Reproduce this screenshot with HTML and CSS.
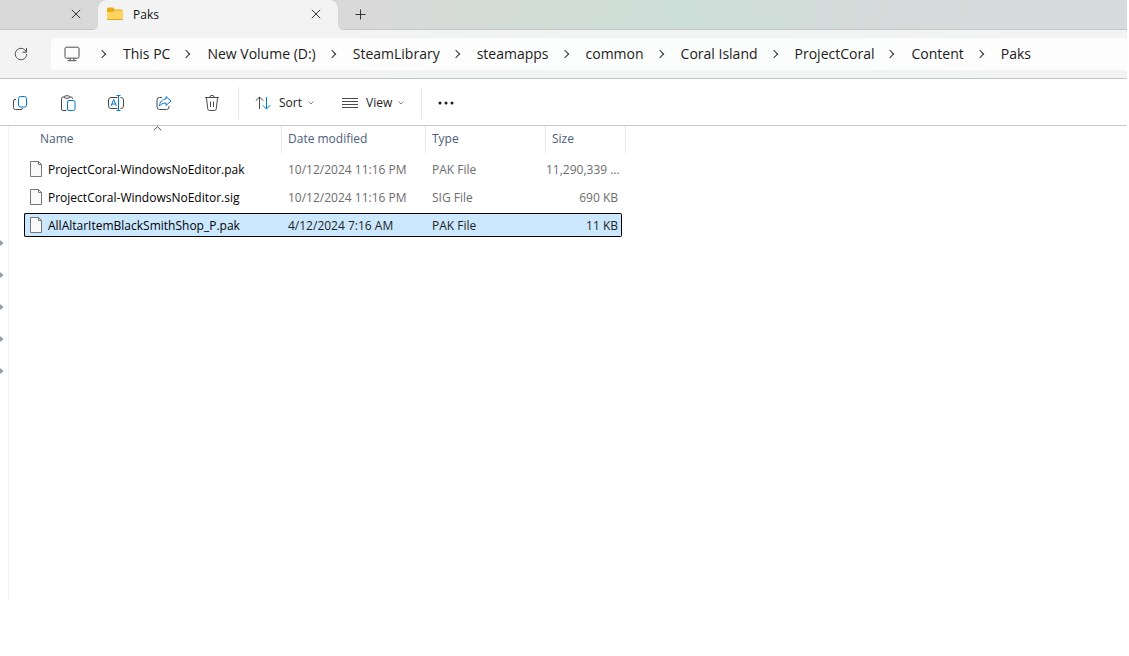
FILE: index.html
```html
<!DOCTYPE html>
<html lang="en">
<head>
<meta charset="utf-8">
<title>Paks</title>
<link rel="stylesheet" href="styles.css">
</head>
<body>
<div class="window">
  <header class="tabs">
    <div class="tab tab-inactive">
      <button class="tab-close" aria-label="Close tab"><svg width="10" height="10" viewBox="0 0 10 10"><path d="M.8.8l8.4 8.4M9.2.8L.8 9.2"/></svg></button>
    </div>
    <div class="tab tab-active">
      <svg class="folder" width="16" height="14" viewBox="0 0 16 14">
        <path d="M0 2a1.500 1.500 0 0 1 1.500-1.500H6L8 2.500h6.500A1.500 1.500 0 0 1 16 4v8H0z" fill="#eeab13"/>
        <path d="M0 5h6l2-1.500h8V12a1 1 0 0 1-1 1H1a1 1 0 0 1-1-1z" fill="#ffd562"/>
        <path d="M.3 12.500h15.400" stroke="#e6a51d" fill="none"/>
      </svg>
      <span class="tab-title">Paks</span>
      <button class="tab-close" aria-label="Close tab Paks"><svg width="10" height="10" viewBox="0 0 10 10"><path d="M.8.8l8.4 8.4M9.2.8L.8 9.2"/></svg></button>
    </div>
    <button class="tab-new" aria-label="New tab"><svg width="11" height="11" viewBox="0 0 11 11"><path d="M5.500.5v10M.5 5.500h10"/></svg></button>
  </header>

  <nav class="address" aria-label="Address">
    <button class="refresh" aria-label="Refresh"><svg width="14" height="14" viewBox="0 0 14 14"><path d="M12.400 5.200A5.700 5.700 0 1 0 12.700 7M12.500 1v4.200H8.500"/></svg></button>
    <ol class="crumbs">
      <li class="device"><svg width="16" height="16" viewBox="0 0 16 16"><rect x="1" y="1.200" width="14" height="11" rx="1.500"/><path d="M6 12.500v2M10 12.500v2M3.500 14.700h9"/></svg></li>
      <li><a href="#">This PC</a></li>
      <li><a href="#">New Volume (D:)</a></li>
      <li><a href="#">SteamLibrary</a></li>
      <li><a href="#">steamapps</a></li>
      <li><a href="#">common</a></li>
      <li><a href="#">Coral Island</a></li>
      <li><a href="#">ProjectCoral</a></li>
      <li><a href="#">Content</a></li>
      <li><a href="#">Paks</a></li>
    </ol>
  </nav>

  <div class="toolbar" role="toolbar" aria-label="Commands">
    <div class="tool-group">
      <button class="tool" aria-label="Copy"><svg width="16" height="16" viewBox="0 0 16 16"><path d="M4 4.500H3A1.500 1.500 0 0 0 1.500 6v6.500A2 2 0 0 0 3.500 14.500H9A1.500 1.500 0 0 0 10.500 13"/><rect class="blue" x="6.500" y="1.500" width="8" height="10.500" rx="2"/></svg></button>
      <button class="tool" aria-label="Paste"><svg width="16" height="16" viewBox="0 0 16 16"><path d="M6.500 15.500H3A1.500 1.500 0 0 1 1.500 14V3.500A1.500 1.500 0 0 1 3 2h1.500M9.500 2H11a1.500 1.500 0 0 1 1.500 1.500V4M5.500.8h3a1 1 0 0 1 1 1v.4a1 1 0 0 1-1 1h-3a1 1 0 0 1-1-1v-.4a1 1 0 0 1 1-1z"/><rect class="blue" x="7.500" y="5.500" width="7.500" height="10" rx="1.500"/></svg></button>
      <button class="tool" aria-label="Rename"><svg width="16" height="16" viewBox="0 0 16 16"><path d="M9.500 2.500H3A2.500 2.500 0 0 0 .5 5v6A2.500 2.500 0 0 0 3 13.500h6.500M12.500 2.500h.5A2.500 2.500 0 0 1 15.500 5v6a2.500 2.500 0 0 1-2.500 2.500h-.5"/><path class="blue" d="M10.500 .5v15M8.500 .5h4M8.500 15.500h4M3 11l2.700-6.500L8.400 11M4 9h3.500"/></svg></button>
      <button class="tool" aria-label="Share"><svg width="16" height="16" viewBox="0 0 16 16"><path d="M6 2.500H3.500A2.500 2.500 0 0 0 1 5v7a2.500 2.500 0 0 0 2.500 2.500h7A2.500 2.500 0 0 0 13 12v-1"/><path class="blue" d="M10 1.500l5 4.500-5 4.500V8C7 8 5 9 3.500 11 3.800 7 6 4.300 10 4z"/></svg></button>
      <button class="tool" aria-label="Delete"><svg width="16" height="16" viewBox="0 0 16 16"><path d="M1 2.500h14M5.800 2.500a2.200 2.200 0 0 1 4.400 0M2.500 3l1.200 10.500A2 2 0 0 0 5.700 15.500h4.600a2 2 0 0 0 2-2L13.500 3M6.500 6.500v5.500M9.500 6.500v5.500"/></svg></button>
    </div>
    <div class="menu-group">
      <button class="menu"><svg width="16" height="14" viewBox="0 0 16 14"><path d="M4.500 13V1M.8 4.700L4.500 1l3.700 3.700"/><path class="blue" d="M11.500 1v12M7.800 9.300l3.700 3.700 3.700-3.700"/></svg><span>Sort</span><svg class="caret" width="6" height="4" viewBox="0 0 6 4"><path d="M.5.5L3 3 5.500.5"/></svg></button>
      <button class="menu"><svg width="16" height="14" viewBox="0 0 16 14"><path d="M0 2.500h16M0 5.500h16M0 8.500h16M0 11.500h16"/></svg><span>View</span><svg class="caret" width="6" height="4" viewBox="0 0 6 4"><path d="M.5.5L3 3 5.500.5"/></svg></button>
    </div>
    <button class="more" aria-label="See more"><svg width="16" height="4" viewBox="0 0 16 4"><circle cx="2" cy="2" r="1.500"/><circle cx="8" cy="2" r="1.500"/><circle cx="14" cy="2" r="1.500"/></svg></button>
  </div>

  <main class="content">
    <aside class="sidebar" aria-label="Pinned folders">
      <svg width="4" height="6" viewBox="0 0 4 6"><path d="M0 .5h1L3.500 3 1 5.500H0z"/></svg>
      <svg width="4" height="6" viewBox="0 0 4 6"><path d="M0 .5h1L3.500 3 1 5.500H0z"/></svg>
      <svg width="4" height="6" viewBox="0 0 4 6"><path d="M0 .5h1L3.500 3 1 5.500H0z"/></svg>
      <svg width="4" height="6" viewBox="0 0 4 6"><path d="M0 .5h1L3.500 3 1 5.500H0z"/></svg>
      <svg width="4" height="6" viewBox="0 0 4 6"><path d="M0 .5h1L3.500 3 1 5.500H0z"/></svg>
    </aside>
    <table class="files">
      <colgroup><col class="col-name"><col class="col-date"><col class="col-type"><col class="col-size"><col class="col-end"></colgroup>
      <thead>
        <tr>
          <th scope="col" aria-sort="ascending">Name<svg class="sorted" width="9" height="5" viewBox="0 0 9 5"><path d="M.8 4.300L4.500.8l3.700 3.500"/></svg></th>
          <th scope="col">Date modified</th>
          <th scope="col">Type</th>
          <th scope="col" colspan="2">Size</th>
        </tr>
      </thead>
      <tbody>
        <tr>
          <td class="name"><div class="file"><svg width="12" height="16" viewBox="0 0 12 16"><path d="M.5.5h8l3 3v12H.5zM8.500.5v3h3"/></svg>ProjectCoral-WindowsNoEditor.pak</div></td>
          <td>10/12/2024 11:16 PM</td><td>PAK File</td><td class="size">11,290,339 ...</td>
        </tr>
        <tr>
          <td class="name"><div class="file"><svg width="12" height="16" viewBox="0 0 12 16"><path d="M.5.5h8l3 3v12H.5zM8.500.5v3h3"/></svg>ProjectCoral-WindowsNoEditor.sig</div></td>
          <td>10/12/2024 11:16 PM</td><td>SIG File</td><td class="size">690 KB</td>
        </tr>
        <tr class="selected">
          <td class="name"><div class="file"><svg width="12" height="16" viewBox="0 0 12 16"><path d="M.5.5h8l3 3v12H.5zM8.500.5v3h3"/></svg>AllAltarItemBlackSmithShop_P.pak</div></td>
          <td>4/12/2024 7:16 AM</td><td>PAK File</td><td class="size">11 KB</td>
        </tr>
      </tbody>
    </table>
  </main>
</div>
</body>
</html>
```
FILE: styles.css
```css
* { box-sizing: border-box; }

body {
  margin: 0;
  background: #fff;
  color: #1b1b1b;
  font: 12px/16px "Open Sans", "Noto Sans", sans-serif;
}

button {
  display: flex;
  align-items: center;
  padding: 0;
  border: 0;
  background: none;
  color: inherit;
  font: inherit;
}

svg {
  display: block;
  flex: none;
  fill: none;
  stroke: #4a4a4a;
}

.blue { stroke: #0078d4; }

.window {
  display: flex;
  flex-direction: column;
  min-height: 100vh;
  margin-right: 2px;
  padding-bottom: 56px;
}

/* Tabs */
.tabs {
  display: flex;
  height: 30px;
  border-bottom: 1px solid #c3c8c7;
  background: linear-gradient(90deg, #d9d9d9 33%, #d2ddd6 48%, #ceded9 60%, #d0ddd9 68%, #d7dada 80%, #d9dade 90%);
}

.tab {
  display: flex;
  align-items: center;
  padding: 0 17px 2px 0;
}

.tab-inactive {
  width: 98px;
  justify-content: flex-end;
}

.tab-active {
  position: relative;
  width: 240px;
  height: 30px;
  padding-left: 9px;
  border-radius: 8px 8px 0 0;
  background: #f3f3f3;
  box-shadow: 0 0 1px #aaa;
  clip-path: inset(0 -4px 0 -4px);
}

/* Curved feet where the tab meets the address bar */
.tab-active::before,
.tab-active::after {
  position: absolute;
  bottom: 0;
  width: 4px;
  height: 4px;
  content: "";
}

.tab-active::before {
  left: -4px;
  background: radial-gradient(circle at 0 0, transparent 3px, #f3f3f3 4px);
}

.tab-active::after {
  right: -4px;
  background: radial-gradient(circle at 100% 0, transparent 3px, #f3f3f3 4px);
}

.folder { stroke: none; }

.tab-title {
  flex: 1;
  margin-left: 10px;
  padding-top: 2px;
  color: #111;
}

.tab-close svg, .tab-new svg { stroke: #333; }
.tab-new { margin-left: 17px; }

/* Address bar */
.address {
  display: flex;
  align-items: center;
  height: 49px;
  padding: 8px 0;
  border-bottom: 1px solid #c3c8c7;
  background: linear-gradient(90deg, #f3f3f3 30%, #f0f4f2 55%, #f0f4f2 70%, #f3f3f4 90%);
}

.refresh {
  width: 51px;
  padding-left: 14px;
}

.crumbs {
  display: flex;
  flex: 1;
  align-items: center;
  height: 32px;
  margin: 0;
  padding: 0 0 0 13px;
  border-radius: 4px 0 0 4px;
  background: linear-gradient(90deg, #fdfdfd 30%, #fbfdfc 55%, #fbfdfc 70%, #fdfdfd 90%);
  font-size: 14px;
  line-height: 20px;
  list-style: none;
}

.crumbs li {
  display: flex;
  align-items: center;
  white-space: nowrap;
}

.crumbs li + li::before {
  width: 5px;
  height: 5px;
  margin: 0 18px 0 13px;
  border: solid #333;
  border-width: 1px 1px 0 0;
  transform: rotate(45deg);
  content: "";
}

.crumbs a {
  color: inherit;
  text-decoration: none;
}

.device { width: 22px; }

/* Commands */
.toolbar {
  display: flex;
  align-items: center;
  height: 47px;
  padding-top: 2px;
  border-bottom: 1px solid #c3c8c7;
}

.tool-group {
  display: flex;
  gap: 32px;
  padding: 0 18px 0 12px;
}

.menu-group {
  display: flex;
  align-items: center;
  gap: 28px;
  height: 32px;
  padding: 0 17px 0 16px;
  border: solid #e8e8e8;
  border-width: 0 1px;
}

.menu span { margin: 0 6px 0 8px; }
.caret { stroke: #888; }
.more { margin-left: 16px; }
.more svg { fill: #1b1b1b; stroke: none; }

/* File list */
.content {
  display: flex;
  flex: 1;
  align-items: stretch;
}

.sidebar {
  display: flex;
  flex-direction: column;
  gap: 26px;
  width: 9px;
  margin-right: 15px;
  padding-top: 114px;
  border-right: 1px solid #f3f3f3;
}

.sidebar svg {
  fill: #939ea4;
  stroke: none;
}

.files {
  align-self: flex-start;
  width: 602px;
  margin-top: -4px;
  border-spacing: 0 4px;
  table-layout: fixed;
}

.col-name { width: 258px; }
.col-date { width: 144px; }
.col-type { width: 120px; }
.col-size { width: 76px; }
.col-end { width: 4px; }

.files th {
  position: relative;
  height: 27px;
  padding: 0 6px 2px;
  border-right: 1px solid #e5e5e5;
  color: #4c607a;
  font-weight: 400;
  text-align: left;
}

.files th:first-child { padding-left: 16px; }

.sorted {
  position: absolute;
  top: 0;
  left: 50%;
}

.files td {
  height: 24px;
  padding: 2px 6px 0;
  border: solid transparent;
  border-width: 1px 0;
  color: #6d6d6d;
  line-height: 18px;
  white-space: nowrap;
}

.files .name {
  padding: 2px 0 0 5px;
  border-left-width: 1px;
  color: #000;
}

.files .size {
  padding: 2px 3px 0 0;
  border-right-width: 1px;
  text-align: right;
}

.file {
  display: flex;
  align-items: flex-start;
  gap: 6px;
}

.file svg {
  fill: #fafafa;
  stroke: #777;
}

.files .selected td {
  border-color: #000;
  background: #cce8ff;
  color: #222;
}

.files .selected .name {
  border-radius: 2px 0 0 2px;
  color: #000;
}

.files .selected .size { border-radius: 0 2px 2px 0; }
```
